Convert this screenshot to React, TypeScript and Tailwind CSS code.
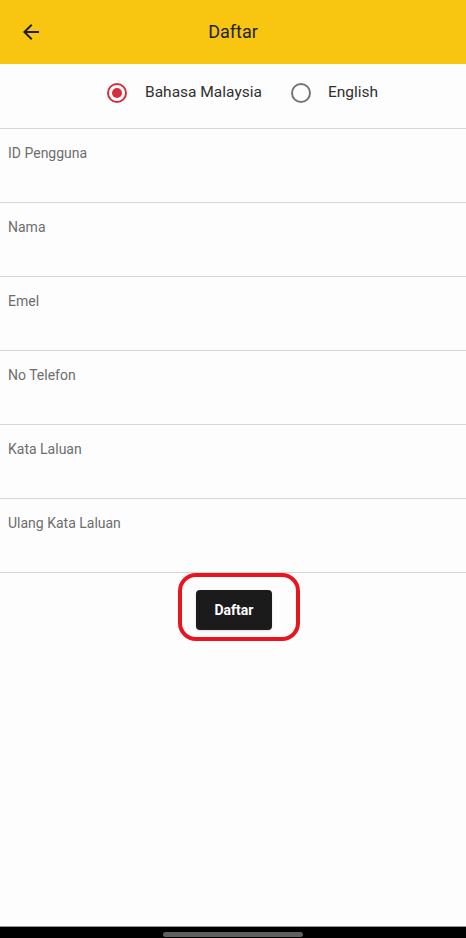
const fields = ["ID Pengguna", "Nama", "Emel", "No Telefon", "Kata Laluan", "Ulang Kata Laluan"]

function BackArrow() {
  return (
    <svg width="24" height="24" viewBox="0 0 24 24" className="text-[#1f1f1f]">
      <path d="M20 11H7.83l5.59-5.59L12 4l-8 8 8 8 1.41-1.41L7.83 13H20v-2z" fill="currentColor" />
    </svg>
  )
}

function Radio({ checked }: { checked: boolean }) {
  return checked ? (
    <span className="flex h-[20px] w-[20px] shrink-0 items-center justify-center rounded-full border-2 border-[#d32f3f]">
      <span className="h-[10px] w-[10px] rounded-full bg-[#d32f3f]" />
    </span>
  ) : (
    <span className="block h-[20px] w-[20px] shrink-0 rounded-full border-2 border-[#757575]" />
  )
}

export default function App() {
  return (
    <div
      className="flex h-[938px] w-[466px] flex-col bg-[#fdfdfd]"
      style={{ fontFamily: "Roboto, 'Noto Sans', sans-serif" }}
    >
      <header className="relative flex h-[64px] shrink-0 items-center bg-[#f8c611]">
        <div className="absolute left-[19px] top-[20px]">
          <BackArrow />
        </div>
        <h1 className="w-full text-center text-[18px] leading-none text-[#232323]">Daftar</h1>
      </header>

      <div className="flex h-[65px] shrink-0 items-center border-b border-[#d6d6d6] pb-[6px] pl-[107px]">
        <Radio checked />
        <span className="ml-[18px] text-[15.5px] leading-none text-[#303030]">Bahasa Malaysia</span>
        <span className="ml-[29px]">
          <Radio checked={false} />
        </span>
        <span className="ml-[17px] text-[15.5px] leading-none text-[#303030]">English</span>
      </div>

      {fields.map((f) => (
        <div
          key={f}
          className="h-[74px] shrink-0 border-b border-[#d6d6d6] px-[8px] pt-[14px] text-[14px] leading-[20px] text-[#6d6d6d]"
        >
          {f}
        </div>
      ))}

      <div className="flex">
        <div className="ml-[178px] flex h-[68px] w-[122px] items-start rounded-[18px] border-[4px] border-[#e8141e] pl-[14px] pt-[13px]">
          <button className="h-[40px] w-[76px] rounded-[4px] bg-[#1b1b1b] text-[14px] font-bold text-white shadow-sm">
            Daftar
          </button>
        </div>
      </div>

      <div className="flex-1" />

      <div className="flex h-[12px] shrink-0 justify-center border-t border-[#9a9a9a] bg-black pt-[5px]">
        <span className="h-[5px] w-[140px] rounded-full bg-[#5f5f5f]" />
      </div>
    </div>
  )
}
